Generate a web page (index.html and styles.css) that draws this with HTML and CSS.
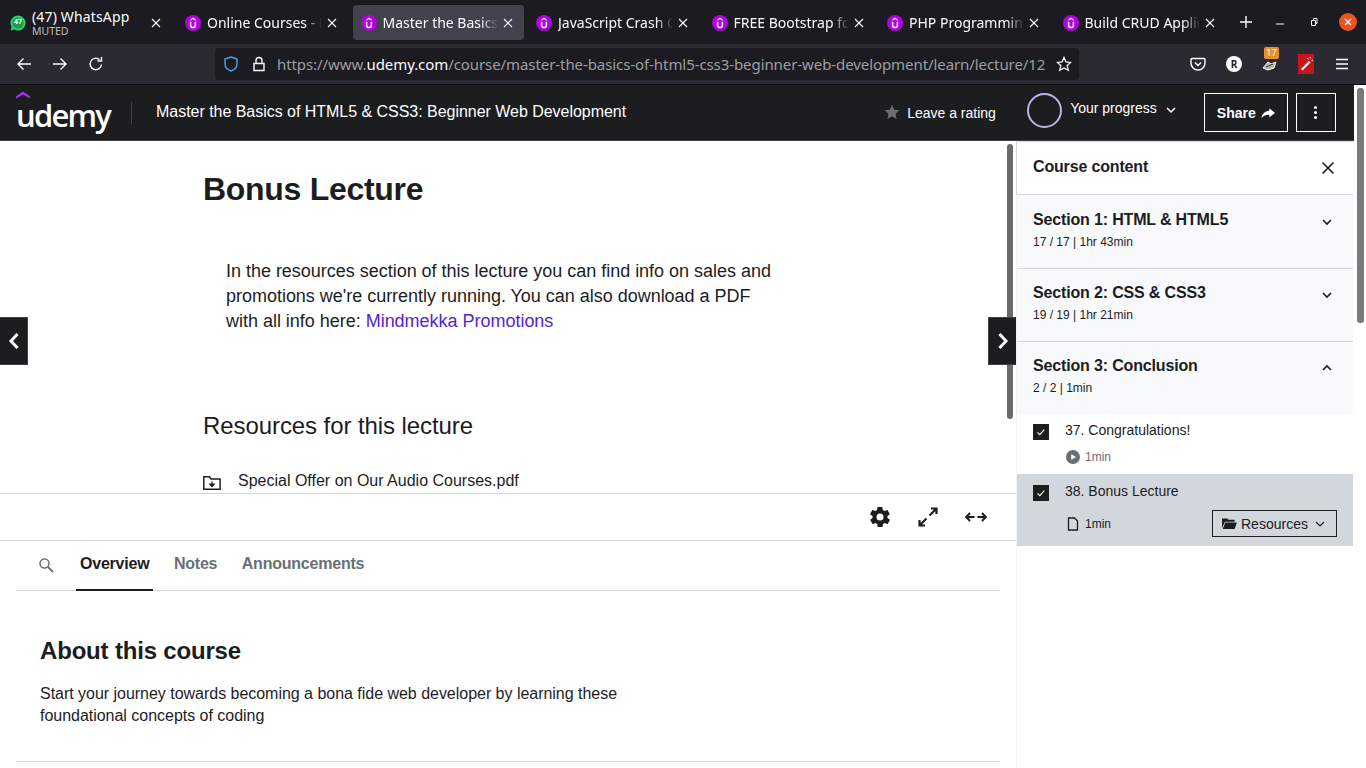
FILE: index.html
```html
<!DOCTYPE html>
<html lang="en">
<head>
  <meta charset="UTF-8" />
  <title>Master the Basics of HTML5 &amp; CSS3</title>
  <link rel="stylesheet" href="styles.css">
</head>
<body>
  <svg class="defs" width="0" height="0">
    <symbol id="u-icon" viewBox="0 0 16 16">
      <circle cx="8" cy="8" r="8" fill="#b400e0"/>
      <path d="M8 2.600l2.600 2V5.800L8 4 5.400 5.800V4.600z" fill="#fff"/>
      <path d="M5.600 6.800v3.400a2.400 2.400 0 0 0 4.800 0V6.800" fill="none" stroke="#fff" stroke-width="1.500"/>
    </symbol>
    <symbol id="x-icon" viewBox="0 0 12 12">
      <path d="M2 2l8 8M10 2l-8 8" stroke="#fbfbfe" stroke-width="1.100"/>
    </symbol>
  </svg>

  <!-- browser tabs -->
  <div class="tabbar">
    <div class="tab tab-first">
      <svg class="fav" viewBox="0 0 16 16"><path d="M8 .5a7.500 7.500 0 0 0-6.400 11.400L.6 15.500l3.700-1A7.500 7.500 0 1 0 8 .5z" fill="#25d366"/><circle cx="8" cy="8" r="5.600" fill="#1a9e4b"/></svg>
      <span class="fav-count">47</span>
      <div class="tab-two">
        <span class="tab-name">(47) WhatsApp</span>
        <span class="tab-sub">MUTED</span>
      </div>
      <svg class="tab-x"><use href="#x-icon"/></svg>
    </div>
    <div class="tab"><svg class="u-fav"><use href="#u-icon"/></svg><span class="tab-text">Online Courses - Learn</span><svg class="tab-x"><use href="#x-icon"/></svg></div>
    <div class="tab tab-on"><svg class="u-fav"><use href="#u-icon"/></svg><span class="tab-text">Master the Basics of</span><svg class="tab-x"><use href="#x-icon"/></svg></div>
    <div class="tab"><svg class="u-fav"><use href="#u-icon"/></svg><span class="tab-text">JavaScript Crash Course</span><svg class="tab-x"><use href="#x-icon"/></svg></div>
    <div class="tab"><svg class="u-fav"><use href="#u-icon"/></svg><span class="tab-text">FREE Bootstrap for</span><svg class="tab-x"><use href="#x-icon"/></svg></div>
    <div class="tab"><svg class="u-fav"><use href="#u-icon"/></svg><span class="tab-text">PHP Programming for</span><svg class="tab-x"><use href="#x-icon"/></svg></div>
    <div class="tab"><svg class="u-fav"><use href="#u-icon"/></svg><span class="tab-text">Build CRUD Application</span><svg class="tab-x"><use href="#x-icon"/></svg></div>
    <svg class="newtab" viewBox="0 0 14 14"><path d="M7 1v12M1 7h12" stroke="#fbfbfe" stroke-width="1.400"/></svg>
    <div class="winbtns">
      <svg class="win" viewBox="0 0 12 12"><path d="M2 8h8" stroke="#fbfbfe" stroke-width="1"/></svg>
      <svg class="win" viewBox="0 0 12 12"><path d="M3.500 4.500h4v5h-4zM5.500 4.500V2.500h3.500v5h-1.500" fill="none" stroke="#fbfbfe" stroke-width="1"/></svg>
      <span class="win-close"><svg viewBox="0 0 10 10"><path d="M2 2l6 6M8 2l-6 6" stroke="#fff" stroke-width="1.200"/></svg></span>
    </div>
  </div>

  <!-- browser toolbar -->
  <div class="toolbar">
    <svg class="tool" viewBox="0 0 16 16"><path d="M15 8H2M7.500 2.500L2 8l5.500 5.500" fill="none" stroke="#fbfbfe" stroke-width="1.400"/></svg>
    <svg class="tool" viewBox="0 0 16 16"><path d="M1 8h13M8.500 2.500L14 8l-5.500 5.500" fill="none" stroke="#fbfbfe" stroke-width="1.400"/></svg>
    <svg class="tool" viewBox="0 0 16 16"><path d="M13.500 8.500A5.700 5.700 0 1 1 11.500 3.600M13.500 1v4h-4" fill="none" stroke="#fbfbfe" stroke-width="1.400"/></svg>
    <div class="urlbar">
      <svg class="shield" viewBox="0 0 16 16"><path d="M8 1l6 2v5c0 3.500-2.500 5.800-6 7-3.500-1.200-6-3.500-6-7V3z" fill="none" stroke="#4aa5e8" stroke-width="1.400"/></svg>
      <svg class="lock" viewBox="0 0 16 16"><path d="M3 7.500h10v7H3zM5 7.500V4.500a3 3 0 0 1 6 0v3" fill="none" stroke="#fbfbfe" stroke-width="1.400"/></svg>
      <span class="url">https://www.<b>udemy.com</b>/course/master-the-basics-of-html5-css3-beginner-web-development/learn/lecture/12</span>
      <svg class="urlstar" viewBox="0 0 16 16"><path d="M8 1.500l2 4.400 4.700.5-3.500 3.200 1 4.700L8 11.900l-4.200 2.400 1-4.700L1.300 6.400 6 5.900z" fill="none" stroke="#fbfbfe" stroke-width="1.300"/></svg>
    </div>
    <div class="addons">
      <svg class="tool" viewBox="0 0 16 16"><path d="M2 2.500h12a1 1 0 0 1 1 1V7a7 7 0 0 1-14 0V3.500a1 1 0 0 1 1-1z" fill="none" stroke="#fbfbfe" stroke-width="1.400"/><path d="M5 6.500l3 3 3-3" fill="none" stroke="#fbfbfe" stroke-width="1.400"/></svg>
      <span class="addon-r">R</span>
      <span class="addon-badge">
        <svg class="tool" viewBox="0 0 16 16"><path d="M1 12l5-6 3 2 5-2-2 6-6 2z" fill="#b9b4a4" stroke="#fbfbfe" stroke-width="1"/><path d="M4 11l7-3" stroke="#333" stroke-width="1"/></svg>
        <span class="badge">17</span>
      </span>
      <span class="addon-red"><svg viewBox="0 0 16 16"><path d="M3 13L11 5l1.500 1.500-8 8z" fill="#fff"/><path d="M12 1l.6 1.500M15 4l-1.500.6M9.500 2l.8 1.500" stroke="#fff" stroke-width="1"/></svg></span>
      <svg class="tool" viewBox="0 0 16 16"><path d="M2 3.500h12M2 8h12M2 12.500h12" stroke="#fbfbfe" stroke-width="1.400"/></svg>
    </div>
  </div>

  <div class="page">
    <div class="course-header">
      <div class="logo">
        <svg class="logo-hat" viewBox="0 0 14 7"><path d="M7 0l7 5V7L7 3 0 7V5z" fill="#a435f0"/></svg>
        <span>udemy</span>
      </div>
      <span class="head-sep"></span>
      <span class="course-title">Master the Basics of HTML5 &amp; CSS3: Beginner Web Development</span>
      <div class="rating">
        <svg class="rating-star" viewBox="0 0 16 16"><path d="M8 .8l2.200 4.900 5.300.5-4 3.600 1.200 5.200L8 12.300 3.300 15l1.200-5.200-4-3.600 5.300-.5z" fill="#6a6f73"/></svg>
        <span>Leave a rating</span>
      </div>
      <span class="ring"></span>
      <span class="progress-text">Your progress</span>
      <svg class="progress-chev" viewBox="0 0 12 12"><path d="M2 4l4 4 4-4" fill="none" stroke="#fff" stroke-width="1.500"/></svg>
      <div class="btn-dark btn-share">Share
        <svg viewBox="0 0 16 16"><path d="M9.500 2.500L16 8l-6.500 5V10C5.500 10 3 11 .5 14c.5-4.500 3.500-8 9-8.500z" fill="#fff"/></svg>
      </div>
      <div class="btn-dark btn-more"><span class="dots"></span></div>
    </div>

    <div class="layout">
      <div class="main">
        <div class="viewer">
          <div class="article">
            <h1>Bonus Lecture</h1>
            <p class="article-body">In the resources section of this lecture you can find info on sales and promotions we're currently running. You can also download a PDF with all info here: <a href="#">Mindmekka Promotions</a></p>
            <h2>Resources for this lecture</h2>
            <div class="resource">
              <svg viewBox="0 0 16 16"><path d="M.7 13.500V2.500h5l1.500 2h8v9z" fill="none" stroke="#1c1d1f" stroke-width="1.300"/><path d="M8 6.500v4M6 9l2 2.300L10 9z" fill="#1c1d1f" stroke="#1c1d1f"/></svg>
              <span>Special Offer on Our Audio Courses.pdf</span>
            </div>
          </div>
          <div class="scroll-inner"></div>
          <div class="nav-arrow nav-prev"><svg viewBox="0 0 12 20"><path d="M9.500 3L3 10l6.500 7" fill="none" stroke="#fff" stroke-width="3"/></svg></div>
          <div class="nav-arrow nav-next"><svg viewBox="0 0 12 20"><path d="M2.500 3L9 10l-6.500 7" fill="none" stroke="#fff" stroke-width="3"/></svg></div>
        </div>

        <div class="controls">
          <svg class="ctl" viewBox="0 0 24 24"><path d="M19.400 13c0-.3.100-.6.100-1s0-.7-.1-1l2.100-1.600c.2-.2.200-.4.100-.6l-2-3.500c-.1-.2-.4-.3-.6-.2l-2.500 1c-.5-.4-1.100-.7-1.700-1l-.4-2.600c0-.3-.2-.5-.5-.5h-4c-.3 0-.5.200-.5.400l-.4 2.700c-.6.200-1.200.6-1.700 1l-2.500-1c-.2-.1-.5 0-.6.200l-2 3.500c-.1.200-.1.500.1.600L4.600 11c0 .3-.1.700-.1 1s0 .7.100 1l-2.100 1.600c-.2.200-.2.400-.1.600l2 3.500c.1.200.4.300.6.200l2.500-1c.5.400 1.100.7 1.700 1l.4 2.600c0 .3.200.5.500.5h4c.3 0 .5-.2.500-.4l.4-2.700c.6-.2 1.200-.6 1.700-1l2.500 1c.2.100.5 0 .6-.2l2-3.500c.1-.2.100-.5-.1-.6zM12 15.500a3.500 3.500 0 1 1 0-7 3.500 3.500 0 0 1 0 7z" fill="#1c1d1f"/></svg>
          <svg class="ctl" viewBox="0 0 24 24"><path d="M13.500 10.500L20 4M15 3.500h5.500V9M10.500 13.500L4 20M3.500 15v5.500H9" fill="none" stroke="#1c1d1f" stroke-width="2.200"/></svg>
          <svg class="ctl" viewBox="0 0 24 24"><path d="M10.500 12H2.500M6 8l-3.800 4L6 16M13.500 12h8M18 8l3.800 4L18 16" fill="none" stroke="#1c1d1f" stroke-width="2"/></svg>
        </div>

        <div class="tabs">
          <svg class="tabs-search" viewBox="0 0 16 16"><circle cx="6.500" cy="6.500" r="4.500" fill="none" stroke="#6a6f73" stroke-width="1.500"/><path d="M10 10l5 5" stroke="#6a6f73" stroke-width="1.800"/></svg>
          <span class="tabs-item tabs-on">Overview</span>
          <span class="tabs-item">Notes</span>
          <span class="tabs-item">Announcements</span>
        </div>

        <div class="about">
          <h3>About this course</h3>
          <p>Start your journey towards becoming a bona fide web developer by learning these foundational concepts of coding</p>
        </div>
        <div class="about-rule"></div>
      </div>

      <div class="sidebar">
        <div class="side-head">
          <span>Course content</span>
          <svg class="side-close" viewBox="0 0 14 14"><path d="M1.500 1.500l11 11M12.500 1.500l-11 11" stroke="#1c1d1f" stroke-width="1.600"/></svg>
        </div>

        <div class="section section-first">
          <div>
            <div class="section-title">Section 1: HTML &amp; HTML5</div>
            <div class="section-meta">17 / 17 | 1hr 43min</div>
          </div>
          <svg class="chev" viewBox="0 0 12 12"><path d="M2 4l4 4 4-4" fill="none" stroke="#1c1d1f" stroke-width="1.600"/></svg>
        </div>
        <div class="section">
          <div>
            <div class="section-title">Section 2: CSS &amp; CSS3</div>
            <div class="section-meta">19 / 19 | 1hr 21min</div>
          </div>
          <svg class="chev" viewBox="0 0 12 12"><path d="M2 4l4 4 4-4" fill="none" stroke="#1c1d1f" stroke-width="1.600"/></svg>
        </div>
        <div class="section section-open">
          <div>
            <div class="section-title">Section 3: Conclusion</div>
            <div class="section-meta">2 / 2 | 1min</div>
          </div>
          <svg class="chev" viewBox="0 0 12 12"><path d="M2 8l4-4 4 4" fill="none" stroke="#1c1d1f" stroke-width="1.600"/></svg>
        </div>

        <div class="item">
          <span class="check"><svg viewBox="0 0 16 16"><path d="M4.500 8.300l2.300 2.300 4.500-5" fill="none" stroke="#fff" stroke-width="1.100"/></svg></span>
          <div class="item-body">
            <div class="item-title">37. Congratulations!</div>
            <div class="item-meta item-meta-grey">
              <svg viewBox="0 0 14 14"><circle cx="7" cy="7" r="7" fill="#6a6f73"/><path d="M5.200 4.300L10 7l-4.800 2.700z" fill="#fff"/></svg>
              <span>1min</span>
            </div>
          </div>
        </div>

        <div class="item item-on">
          <span class="check"><svg viewBox="0 0 16 16"><path d="M4.500 8.300l2.300 2.300 4.500-5" fill="none" stroke="#fff" stroke-width="1.100"/></svg></span>
          <div class="item-body">
            <div class="item-title">38. Bonus Lecture</div>
            <div class="item-row">
              <div class="item-meta">
                <svg viewBox="0 0 14 14"><path d="M2.500 1h6l3 3v9h-9z" fill="none" stroke="#1c1d1f" stroke-width="1.300"/></svg>
                <span>1min</span>
              </div>
              <div class="res-btn">
                <svg class="res-folder" viewBox="0 0 16 14"><path d="M0 12V1.500h5.500l1.500 1.500h6.500v2H3L0 12zM3.500 6H16l-2.500 7H.8z" fill="#1c1d1f"/></svg>
                <span>Resources</span>
                <svg class="res-chev" viewBox="0 0 12 12"><path d="M2 4l4 4 4-4" fill="none" stroke="#1c1d1f" stroke-width="1.200"/></svg>
              </div>
            </div>
          </div>
        </div>
      </div>
    </div>
    <div class="scroll-outer"></div>
  </div>
</body>
</html>
```

FILE: styles.css
```css
body {
  margin: 0;
  width: 1366px;
  height: 768px;
  overflow: hidden;
  background: #fff;
  color: #1c1d1f;
  font-family: "Liberation Sans", Arial, sans-serif;
}

.defs {
  position: absolute;
}

/* browser tabs */
.tabbar {
  height: 44px;
  background: #1c1b22;
  display: flex;
  align-items: center;
  color: #fbfbfe;
  font-family: "Noto Sans", sans-serif;
}

.tab {
  width: 171.5px;
  height: 35px;
  margin: 1px 4px 0 0;
  flex: none;
  display: flex;
  align-items: center;
  padding: 0 10.5px 0 8px;
  box-sizing: border-box;
  border-radius: 4px;
  font-size: 14px;
  position: relative;
}

.tab-first {
  width: 173px;
  padding: 0 11px 0 10px;
}

.tab-on {
  background: #42414d;
}

.fav {
  width: 16px;
  height: 16px;
  flex: none;
}

.fav-count {
  position: absolute;
  left: 12px;
  top: 12px;
  width: 12px;
  text-align: center;
  font-size: 7px;
  font-weight: 700;
  color: #fff;
}

.tab-two {
  margin-left: 6px;
  display: flex;
  flex-direction: column;
  flex: 1;
  line-height: 15px;
}

.tab-name {
  font-size: 14px;
  line-height: 17px;
  letter-spacing: 0.15px;
}

.tab-sub {
  font-size: 10.5px;
  line-height: 13px;
  color: #bdbdc3;
}

.u-fav {
  width: 16px;
  height: 16px;
  flex: none;
}

.tab-text {
  flex: 1;
  min-width: 0;
  margin-left: 6px;
  overflow: hidden;
  white-space: nowrap;
  -webkit-mask-image: linear-gradient(to right, #000 85%, transparent 100%);
  mask-image: linear-gradient(to right, #000 85%, transparent 100%);
}

.tab-x {
  width: 12px;
  height: 12px;
  margin-left: 4px;
  flex: none;
}

.newtab {
  width: 14px;
  height: 14px;
  margin-left: 9px;
  flex: none;
}

.winbtns {
  margin-left: auto;
  display: flex;
  align-items: center;
  gap: 22px;
  padding-right: 9px;
}

.win {
  width: 12px;
  height: 12px;
}

.win-close {
  width: 18px;
  height: 18px;
  margin-left: -3px;
  border-radius: 50%;
  background: #e95420;
  display: flex;
  align-items: center;
  justify-content: center;
}

.win-close svg {
  width: 10px;
  height: 10px;
}

/* browser toolbar */
.toolbar {
  height: 40px;
  background: #2b2a33;
  border-bottom: 1px solid #0c0c0d;
  display: flex;
  align-items: center;
  padding-left: 16px;
}

.tool {
  width: 16px;
  height: 16px;
  flex: none;
}

.toolbar > .tool {
  margin-right: 20px;
}

.urlbar {
  width: 864px;
  height: 32px;
  margin-left: 91px;
  background: #1c1b22;
  border-radius: 4px;
  display: flex;
  align-items: center;
  font-family: "Noto Sans", sans-serif;
  flex: none;
}

.shield {
  width: 16px;
  height: 16px;
  margin-left: 8px;
  flex: none;
}

.lock {
  width: 16px;
  height: 16px;
  margin-left: 12px;
  flex: none;
}

.url {
  width: 771px;
  margin-left: 10px;
  overflow: hidden;
  white-space: nowrap;
  font-size: 15px;
  letter-spacing: -0.08px;
  color: #9e9ea3;
}

.url b {
  font-weight: 400;
  color: #fbfbfe;
}

.urlstar {
  width: 16px;
  height: 16px;
  margin-left: 8px;
  flex: none;
}

.addons {
  margin-left: 111px;
  display: flex;
  align-items: center;
  gap: 20px;
}

.addon-r {
  width: 16px;
  height: 16px;
  border-radius: 50%;
  background: #fff;
  color: #1c1b22;
  font: 700 10px/16px "Noto Sans", sans-serif;
  text-align: center;
}

.addon-badge {
  position: relative;
  display: flex;
}

.badge {
  position: absolute;
  left: 2px;
  top: -9px;
  width: 15px;
  height: 12px;
  background: #e8912c;
  border-radius: 2px;
  color: #fff;
  font: 9px/12px "Noto Sans", sans-serif;
  text-align: center;
}

.addon-red {
  width: 16px;
  height: 20px;
  background: #c8141c;
  display: flex;
  align-items: center;
}

.addon-red svg {
  width: 16px;
  height: 16px;
}

/* page */
.page {
  position: relative;
  width: 1366px;
  height: 683px;
  overflow: hidden;
}

.course-header {
  width: 1354px;
  height: 56px;
  box-sizing: border-box;
  background: #1c1d1f;
  border-bottom: 1px solid #3e4143;
  color: #fff;
  display: flex;
  align-items: center;
  padding-left: 16px;
}

.logo {
  width: 91px;
  flex: none;
  position: relative;
  font: 600 31px/34px "Open Sans", sans-serif;
  letter-spacing: -1.8px;
  margin-top: 4px;
}

.logo-hat {
  position: absolute;
  left: 0;
  top: -7px;
  width: 14px;
  height: 8px;
}

.head-sep {
  width: 1px;
  height: 22px;
  margin-left: 24px;
  background: #3e4143;
  flex: none;
}

.course-title {
  margin: -2px 0 0 24px;
  font-size: 16px;
  letter-spacing: -0.03px;
  flex: none;
}

.rating {
  margin-left: 258px;
  width: 111px;
  flex: none;
  display: flex;
  align-items: center;
  font-size: 14px;
  white-space: nowrap;
}

.rating-star {
  width: 16px;
  height: 16px;
  margin: -2px 7px 0 0;
  flex: none;
}

.ring {
  width: 31px;
  height: 31px;
  margin: -5px 0 0 32px;
  border: 2px solid #c0b3e8;
  border-radius: 50%;
  flex: none;
}

.progress-text {
  margin: -10px 0 0 8px;
  font-size: 14px;
  flex: none;
}

.progress-chev {
  width: 12px;
  height: 12px;
  margin: -6px 0 0 8px;
  flex: none;
}

.btn-dark {
  height: 39px;
  box-sizing: border-box;
  border: 1px solid #fff;
  display: flex;
  align-items: center;
  justify-content: center;
  flex: none;
}

.btn-share {
  width: 84px;
  margin-left: 27px;
  font-size: 14px;
  font-weight: 700;
  gap: 5px;
}

.btn-share svg {
  width: 14px;
  height: 14px;
}

.btn-more {
  width: 40px;
  margin-left: 8px;
}

.dots {
  width: 3px;
  height: 3px;
  background: #fff;
  border-radius: 50%;
  box-shadow: 0 -5px 0 #fff, 0 5px 0 #fff;
}

.layout {
  display: flex;
  width: 1353px;
  height: 627px;
}

.main {
  width: 1016px;
  flex: none;
}

/* article area */
.viewer {
  height: 352px;
  border-bottom: 1px solid #d1d7dc;
  overflow: hidden;
  position: relative;
}

.article {
  padding: 29px 0 0 203px;
}

.article h1 {
  margin: 0;
  font-size: 32px;
  line-height: 38px;
  font-weight: 700;
  letter-spacing: -0.3px;
}

.article-body {
  width: 560px;
  margin: 51px 0 0 23px;
  font-size: 18px;
  line-height: 25px;
  letter-spacing: -0.02px;
}

.article-body a {
  color: #5624d0;
  text-decoration: none;
}

.article h2 {
  margin: 77px 0 0;
  font-size: 24px;
  line-height: 29px;
  font-weight: 400;
  letter-spacing: -0.08px;
}

.resource {
  margin-top: 29px;
  display: flex;
  align-items: center;
  font-size: 16px;
}

.resource svg {
  width: 18px;
  height: 18px;
  margin: 5px 17px 0 0;
}

.scroll-inner {
  position: absolute;
  left: 1007px;
  top: 3px;
  width: 6px;
  height: 275px;
  border-radius: 3px;
  background: #6b6b6b;
}

.nav-arrow {
  position: absolute;
  top: 176px;
  width: 27px;
  height: 46px;
  background: #1c1d1f;
  border: 1px solid #3e4143;
  display: flex;
  align-items: center;
  justify-content: center;
}

.nav-arrow svg {
  width: 12px;
  height: 20px;
}

.nav-prev {
  left: 0;
  border-left: 0;
}

.nav-next {
  right: 0;
  border-right: 0;
}

.controls {
  height: 46px;
  border-bottom: 1px solid #d1d7dc;
  display: flex;
  align-items: center;
  justify-content: flex-end;
  gap: 24px;
  padding-right: 28px;
}

.ctl {
  width: 24px;
  height: 24px;
}

.tabs {
  height: 49px;
  margin: 0 16px;
  border-bottom: 1px solid #d1d7dc;
  display: flex;
  align-items: stretch;
}

.tabs-search {
  width: 16px;
  height: 16px;
  margin: 16px 22px 0 22px;
}

.tabs-item {
  padding: 0 4px;
  margin-right: 16.5px;
  font-size: 16px;
  font-weight: 700;
  line-height: 45px;
  letter-spacing: -0.22px;
  color: #6a6f73;
}

.tabs-on {
  color: #1c1d1f;
  border-bottom: 2px solid #1c1d1f;
  height: 48px;
}

.about {
  padding: 45px 0 0 40px;
  height: 126px;
  box-sizing: border-box;
}

.about h3 {
  margin: 0;
  font-size: 24px;
  line-height: 29px;
  font-weight: 700;
  letter-spacing: -0.18px;
}

.about p {
  width: 600px;
  margin: 18px 0 0;
  font-size: 16px;
  line-height: 22px;
  letter-spacing: -0.025px;
}

.about-rule {
  margin: 44px 16px 0;
  border-top: 1px solid #d1d7dc;
}

/* course content sidebar */
.sidebar {
  width: 337px;
  flex: none;
  border-left: 1px solid #f0f2f4;
  box-sizing: border-box;
}

.side-head {
  height: 54px;
  box-sizing: border-box;
  border-top: 1px solid #d1d7dc;
  border-left: 1px solid #d1d7dc;
  border-bottom: 1px solid #d1d7dc;
  margin-left: -1px;
  display: flex;
  align-items: center;
  justify-content: space-between;
  padding: 0 18px 2px 16px;
  font-size: 16px;
  font-weight: 700;
  letter-spacing: -0.16px;
}

.side-close {
  width: 14px;
  height: 14px;
  margin-top: 2px;
}

.section {
  height: 73px;
  box-sizing: border-box;
  background: #f7f9fa;
  border-bottom: 1px solid #d1d7dc;
  display: flex;
  justify-content: space-between;
  padding: 14px 20px 0 16px;
}

.section-first {
  height: 74px;
  padding-top: 15px;
}

.section-open {
  border-bottom: 0;
  height: 72px;
}

.section-title {
  font-size: 16px;
  font-weight: 700;
  line-height: 20px;
  letter-spacing: -0.16px;
}

.section-meta {
  margin-top: 4px;
  font-size: 12px;
  line-height: 16px;
}

.chev {
  width: 12px;
  height: 12px;
  margin-top: 6px;
}

.item {
  display: flex;
  height: 60px;
  padding: 10px 16px 0 16px;
  box-sizing: border-box;
}

.item-on {
  height: 72px;
  padding-top: 11px;
  background: #d1d7dc;
}

.check {
  width: 16px;
  height: 16px;
  background: #1c1d1f;
  flex: none;
  display: flex;
}

.check svg {
  width: 16px;
  height: 16px;
}

.item-body {
  flex: 1;
  margin-left: 16px;
}

.item-title {
  font-size: 14px;
  line-height: 13px;
}

.item-meta {
  display: flex;
  align-items: center;
  font-size: 12px;
  line-height: 14px;
}

.item-meta svg {
  width: 14px;
  height: 14px;
  margin: 1px 5px 0 1px;
}

.item-meta-grey {
  margin-top: 12px;
  color: #6a6f73;
}

.item-row {
  margin-top: 12px;
  display: flex;
  align-items: center;
  justify-content: space-between;
}

.res-btn {
  width: 125px;
  height: 27px;
  box-sizing: border-box;
  border: 1px solid #1c1d1f;
  display: flex;
  align-items: center;
  padding-left: 9px;
  font-size: 14px;
}

.res-folder {
  width: 15px;
  height: 13px;
  margin-right: 4px;
}

.res-chev {
  width: 12px;
  height: 12px;
  margin-left: 6px;
}

.scroll-outer {
  position: absolute;
  left: 1357px;
  top: 3px;
  width: 7px;
  height: 235px;
  border-radius: 3px;
  background: #7a7a7a;
}
```
